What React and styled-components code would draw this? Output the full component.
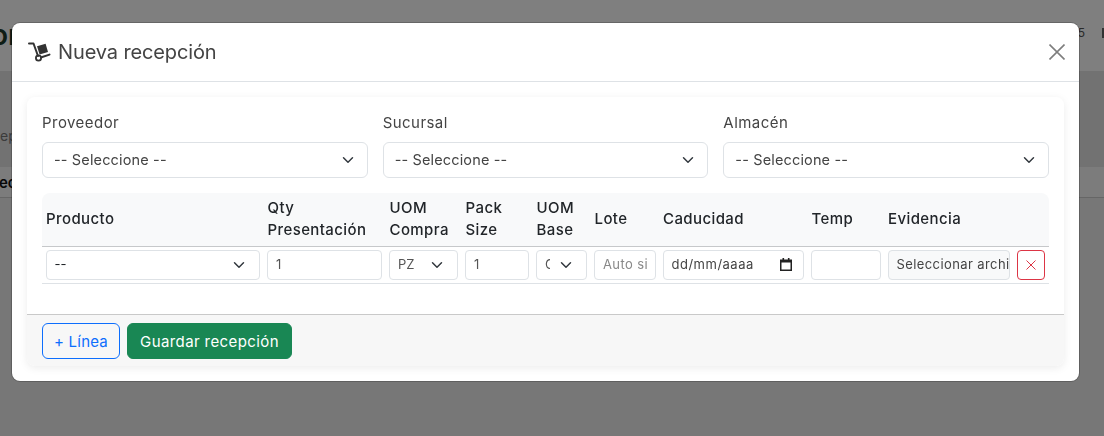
import React from "react";
import styled, { createGlobalStyle } from "styled-components";

const chevron = `url("data:image/svg+xml,%3csvg xmlns='http://www.w3.org/2000/svg' viewBox='0 0 16 16'%3e%3cpath fill='none' stroke='%23343a40' stroke-linecap='round' stroke-linejoin='round' stroke-width='2' d='m2 5 6 6 6-6'/%3e%3c/svg%3e")`;

const columns = [
    { label: ["Producto"], width: 221.5 },
    { label: ["Qty", "Presentación"], width: 122 },
    { label: ["UOM", "Compra"], width: 76 },
    { label: ["Pack", "Size"], width: 71 },
    { label: ["UOM", "Base"], width: 58 },
    { label: ["Lote"], width: 68.5 },
    { label: ["Caducidad"], width: 148.5 },
    { label: ["Temp"], width: 76.5 },
    { label: ["Evidencia"], width: 129.5 },
    { label: [], width: 35.5 },
];

const filters = ["Proveedor", "Sucursal", "Almacén"];

function DollyIcon() {
    return (
        <svg width="23" height="20" viewBox="0 0 23 20">
            <path d="M1 1.5h4.5L10 14" stroke="#333" strokeWidth="2" strokeLinecap="round" strokeLinejoin="round" fill="none" />
            <circle cx="10.5" cy="16" r="2.6" stroke="#333" strokeWidth="1.8" fill="none" />
            <path d="M13.5 15.2l8-2.6" stroke="#333" strokeWidth="2" strokeLinecap="round" fill="none" />
            <path d="M9 4.2 17.6 1.8 20 10 11.6 12.5z" fill="#333" />
        </svg>
    );
}

function App() {
    return (
        <>
            <GlobalStyle />
            <TopBand>
                <PageTitle>or</PageTitle>
                <TopMeta>
                    <span>5</span>
                    <MetaBox />
                </TopMeta>
            </TopBand>
            <FilterBand>
                <FilterText>ep</FilterText>
            </FilterBand>
            <TableBand>ec</TableBand>
            <Backdrop />
            <Modal>
                <ModalHeader>
                    <ModalTitle>
                        <DollyIcon />
                        Nueva recepción
                    </ModalTitle>
                    <CloseButton aria-label="Cerrar">
                        <svg width="16" height="16" viewBox="0 0 16 16">
                            <path d="M.5.5l15 15M15.5.5l-15 15" stroke="#000" strokeWidth="1.6" fill="none" />
                        </svg>
                    </CloseButton>
                </ModalHeader>
                <ModalBody>
                    <Card>
                        <CardBody>
                            <FilterGrid>
                                {filters.map((name) => (
                                    <Field key={name}>
                                        <FieldLabel>{name}</FieldLabel>
                                        <BigSelect>
                                            <option>-- Seleccione --</option>
                                        </BigSelect>
                                    </Field>
                                ))}
                            </FilterGrid>
                            <LinesTable>
                                <colgroup>
                                    {columns.map((col, i) => (
                                        <col key={i} style={{ width: col.width }} />
                                    ))}
                                </colgroup>
                                <thead>
                                    <tr>
                                        {columns.map((col, i) => (
                                            <HeadCell key={i}>
                                                {col.label.map((line) => (
                                                    <div key={line}>{line}</div>
                                                ))}
                                            </HeadCell>
                                        ))}
                                    </tr>
                                </thead>
                                <tbody>
                                    <tr>
                                        <RowCell>
                                            <SmallSelect $dark>
                                                <option>--</option>
                                            </SmallSelect>
                                        </RowCell>
                                        <RowCell>
                                            <SmallInput defaultValue="1" />
                                        </RowCell>
                                        <RowCell>
                                            <SmallSelect>
                                                <option>PZ</option>
                                            </SmallSelect>
                                        </RowCell>
                                        <RowCell>
                                            <SmallInput defaultValue="1" />
                                        </RowCell>
                                        <RowCell>
                                            <SmallSelect>
                                                <option>CAJA</option>
                                            </SmallSelect>
                                        </RowCell>
                                        <RowCell>
                                            <SmallInput placeholder="Auto si no se indica" />
                                        </RowCell>
                                        <RowCell>
                                            <DateBox>
                                                dd/mm/aaaa
                                                <svg width="12" height="13" viewBox="0 0 12 13">
                                                    <path d="M0 1.5h12V13H0zM1.5 4.5V11.5H10.5V4.5z" fill="#222" fillRule="evenodd" />
                                                    <path d="M2.5 0h1.6v2H2.5zM7.9 0h1.6v2H7.9z" fill="#222" />
                                                </svg>
                                            </DateBox>
                                        </RowCell>
                                        <RowCell>
                                            <SmallInput />
                                        </RowCell>
                                        <RowCell>
                                            <FileBox>Seleccionar archivo</FileBox>
                                        </RowCell>
                                        <RowCell>
                                            <RemoveButton aria-label="Quitar">
                                                <svg width="10" height="10" viewBox="0 0 10 10">
                                                    <path d="M.5.5l9 9M9.5.5l-9 9" stroke="#dc3545" strokeWidth="1" fill="none" />
                                                </svg>
                                            </RemoveButton>
                                        </RowCell>
                                    </tr>
                                </tbody>
                            </LinesTable>
                        </CardBody>
                        <CardFooter>
                            <OutlineButton>+ Línea</OutlineButton>
                            <SaveButton>Guardar recepción</SaveButton>
                        </CardFooter>
                    </Card>
                </ModalBody>
            </Modal>
        </>
    );
}

export default App;

const GlobalStyle = createGlobalStyle`
    html, body {
        margin: 0;
        height: 436px;
        overflow: hidden;
        background: #eeeeee;
        font-family: Inter, "Liberation Sans", sans-serif;
    }
    * {
        box-sizing: border-box;
    }
`;

const TopBand = styled.header`
    display: flex;
    justify-content: space-between;
    align-items: center;
    height: 71px;
    padding-bottom: 2px;
    background: #ffffff;
    overflow: hidden;
`;

const PageTitle = styled.h1`
    margin: 0 0 0 -9px;
    font-size: 28px;
    font-weight: 600;
    color: #1c3a2a;
`;

const TopMeta = styled.div`
    display: flex;
    align-items: center;
    gap: 17px;
    margin: 0 -5px 4px 0;
    font-size: 12px;
    color: #555;
`;

const MetaBox = styled.div`
    width: 7px;
    height: 10px;
    background: #666;
`;

const FilterBand = styled.section`
    display: flex;
    align-items: center;
    height: 96px;
    padding-top: 32px;
    background: #e4e4e4;
`;

const FilterText = styled.span`
    font-size: 14px;
    color: #777;
`;

const TableBand = styled.div`
    height: 31px;
    margin-left: -1px;
    padding-top: 6px;
    border-bottom: 1px solid #cccccc;
    background: #f8f8f8;
    font-size: 15px;
    font-weight: 600;
    color: #111;
`;

const Backdrop = styled.div`
    position: fixed;
    inset: 0;
    background: rgba(0, 0, 0, 0.5);
`;

const Modal = styled.div`
    position: fixed;
    top: 23px;
    left: 12px;
    width: 1067px;
    height: 358px;
    border-radius: 8px;
    background: #ffffff;
    box-shadow: 0 0 0 1px rgba(0, 0, 0, 0.2);
`;

const ModalHeader = styled.div`
    display: flex;
    justify-content: space-between;
    align-items: center;
    height: 59px;
    padding: 0 14px 0 16px;
    border-bottom: 1px solid #dee2e6;
`;

const ModalTitle = styled.h5`
    display: flex;
    align-items: center;
    gap: 7px;
    margin: 0;
    font-size: 20px;
    font-weight: 400;
    letter-spacing: -0.13px;
    color: #444;
`;

const CloseButton = styled.button`
    display: flex;
    padding: 0;
    border: 0;
    background: none;
    opacity: 0.5;
`;

const ModalBody = styled.div`
    padding: 15px;
`;

const Card = styled.div`
    display: flex;
    flex-direction: column;
    height: 269px;
    border-radius: 8px;
    background: #ffffff;
    box-shadow: 0 2px 8px rgba(0, 0, 0, 0.08);
`;

const CardBody = styled.div`
    flex: 1;
    padding: 16px 15px 0;
`;

const FilterGrid = styled.div`
    display: grid;
    grid-template-columns: repeat(3, 1fr);
    gap: 15px;
`;

const Field = styled.div`
    display: flex;
    flex-direction: column;
    gap: 9px;
`;

const FieldLabel = styled.label`
    font-size: 15px;
    line-height: 20px;
    letter-spacing: 0.45px;
    color: #444;
`;

const BigSelect = styled.select`
    appearance: none;
    width: 100%;
    height: 36px;
    padding: 0 36px 2px 11px;
    border: 1px solid #dee2e6;
    border-radius: 6px;
    background: #fff ${chevron} no-repeat right 13px center / 12px 12px;
    font: inherit;
    font-size: 14.5px;
    letter-spacing: 0.15px;
    color: #444;
`;

const LinesTable = styled.table`
    width: 1007px;
    margin-top: 15px;
    border-collapse: collapse;
    table-layout: fixed;
`;

const HeadCell = styled.th`
    height: 53px;
    padding: 0 4px;
    border-bottom: 1px solid #c6c8ca;
    background: #f8f9fa;
    font-size: 15px;
    font-weight: 500;
    line-height: 22px;
    letter-spacing: 0.4px;
    text-align: left;
    white-space: nowrap;
    color: #212529;
    &:first-child {
        border-top-left-radius: 8px;
    }
    &:last-child {
        border-top-right-radius: 8px;
    }
`;

const RowCell = styled.td`
    height: 37px;
    padding: 0 3.5px;
    border-bottom: 1px solid #dee2e6;
`;

const SmallSelect = styled.select`
    appearance: none;
    display: block;
    width: 100%;
    height: 30px;
    padding: 0 36px 1px 8px;
    border: 1px solid #dee2e6;
    border-radius: 4px;
    background: #fff ${chevron} no-repeat right 14px center / 12px 12px;
    font: inherit;
    font-size: 13px;
    color: ${(p) => (p.$dark ? "#212529" : "#555")};
`;

const SmallInput = styled.input`
    display: block;
    width: 100%;
    height: 30px;
    padding: 0 8px 1px;
    border: 1px solid #dee2e6;
    border-radius: 4px;
    font: inherit;
    font-size: 13px;
    letter-spacing: 0.4px;
    color: #555;
    &::placeholder {
        color: #888;
    }
`;

const DateBox = styled.div`
    display: flex;
    justify-content: space-between;
    align-items: center;
    height: 30px;
    padding: 0 11px 1px 8px;
    border: 1px solid #dee2e6;
    border-radius: 4px;
    font-size: 13px;
    letter-spacing: 0.5px;
    color: #444;
`;

const FileBox = styled.div`
    display: flex;
    align-items: center;
    height: 30px;
    padding: 0 8px 1px;
    overflow: hidden;
    border: 1px solid #dee2e6;
    border-radius: 4px;
    background: #f8f9fa;
    font-size: 13px;
    letter-spacing: 0.4px;
    white-space: nowrap;
    color: #444;
`;

const RemoveButton = styled.button`
    display: flex;
    justify-content: center;
    align-items: center;
    width: 28px;
    height: 30px;
    padding: 0;
    border: 1px solid #dc3545;
    border-radius: 4px;
    background: #fff;
`;

const CardFooter = styled.div`
    display: flex;
    gap: 7px;
    height: 52px;
    padding: 8px 15px;
    border-top: 1px solid #c9c9c9;
    border-radius: 0 0 8px 8px;
    background: #f7f7f7;
`;

const OutlineButton = styled.button`
    width: 78px;
    height: 36px;
    padding: 0;
    border: 1px solid #0d6efd;
    border-radius: 6px;
    background: transparent;
    font: inherit;
    font-size: 15px;
    letter-spacing: 0.2px;
    color: #0d6efd;
`;

const SaveButton = styled.button`
    width: 165px;
    height: 36px;
    padding: 0;
    border: 1px solid #198754;
    border-radius: 6px;
    background: #198754;
    font: inherit;
    font-size: 15px;
    letter-spacing: 0.4px;
    color: #fff;
`;
